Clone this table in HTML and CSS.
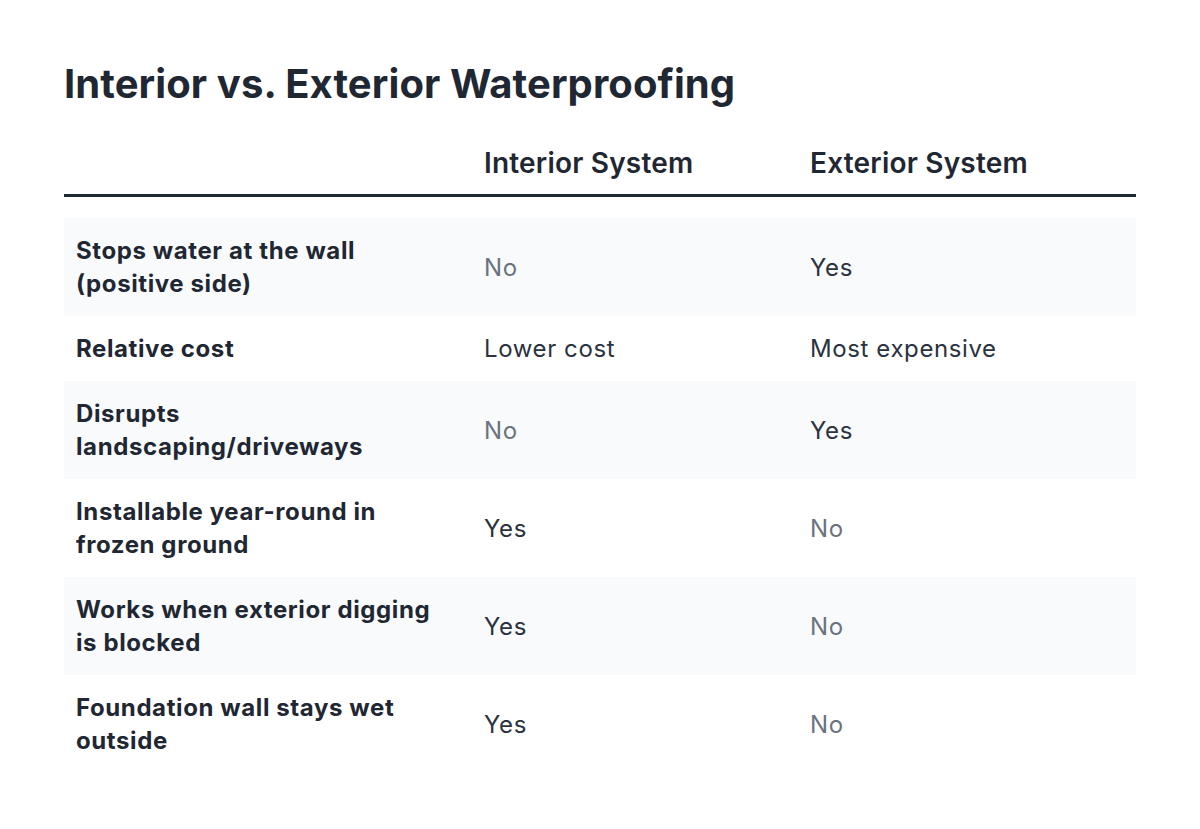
FILE: index.html
```html
<!DOCTYPE html>
<html lang="en">
<head>
<meta charset="utf-8">
<title>Interior vs. Exterior Waterproofing</title>
<link rel="stylesheet" href="styles.css">
</head>
<body>
<main class="page">
  <h1 class="title">Interior vs. Exterior Waterproofing</h1>
  <div class="table" role="table">
    <div class="head" role="row">
      <div class="hcell" role="columnheader"></div>
      <div class="hcell" role="columnheader">Interior System</div>
      <div class="hcell" role="columnheader">Exterior System</div>
    </div>
    <div class="row striped" role="row">
      <div class="label">Stops water at the wall (positive side)</div>
      <div class="cell muted">No</div>
      <div class="cell">Yes</div>
    </div>
    <div class="row" role="row">
      <div class="label">Relative cost</div>
      <div class="cell">Lower cost</div>
      <div class="cell">Most expensive</div>
    </div>
    <div class="row striped" role="row">
      <div class="label">Disrupts landscaping/driveways</div>
      <div class="cell muted">No</div>
      <div class="cell">Yes</div>
    </div>
    <div class="row" role="row">
      <div class="label">Installable year-round in frozen ground</div>
      <div class="cell">Yes</div>
      <div class="cell muted">No</div>
    </div>
    <div class="row striped" role="row">
      <div class="label">Works when exterior digging is blocked</div>
      <div class="cell">Yes</div>
      <div class="cell muted">No</div>
    </div>
    <div class="row" role="row">
      <div class="label">Foundation wall stays wet outside</div>
      <div class="cell">Yes</div>
      <div class="cell muted">No</div>
    </div>
  </div>
</main>
</body>
</html>
```
FILE: styles.css
```css
html, body {
  margin: 0;
  padding: 0;
  background: #ffffff;
}
body {
  font-family: Inter, "Noto Sans", "Liberation Sans", sans-serif;
  color: #1f2733;
}
.page {
  padding: 58px 64px 40px;
}
.title {
  margin: 0;
  font-size: 40px;
  line-height: 52px;
  font-weight: 700;
  color: #1f2733;
  letter-spacing: 0.1px;
}
.table {
  margin-top: 23px;
}
.head,
.row {
  display: grid;
  grid-template-columns: 408px 326px 1fr;
}
.head {
  border-bottom: 3px solid #1f2933;
  margin-bottom: 21px;
}
.hcell {
  padding: 12px 12px 13px;
  font-size: 28px;
  line-height: 36px;
  font-weight: 600;
  letter-spacing: 0.2px;
  color: #1f2733;
}
.row {
  align-items: center;
}
.striped {
  background: #f8fafc;
}
.label,
.cell {
  padding: 16px 12px;
  font-size: 24px;
  line-height: 33px;
  letter-spacing: 0.6px;
}
.label {
  font-weight: 700;
  color: #1f2733;
  padding-right: 34px;
}
.cell {
  font-weight: 400;
  color: #2b3240;
}
.cell.muted {
  color: #6b7280;
}
```
